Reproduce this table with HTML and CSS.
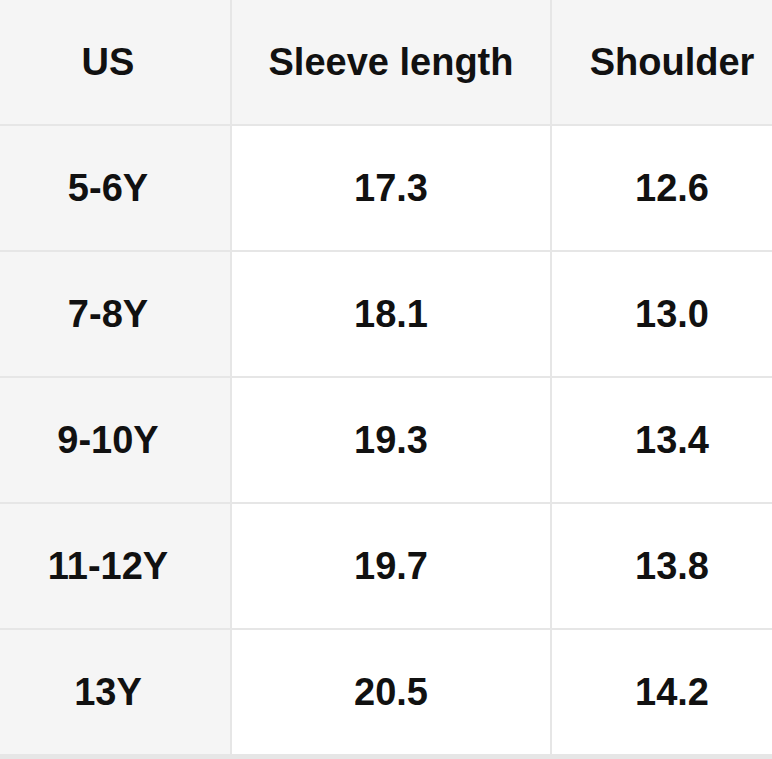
FILE: index.html
```html
<!DOCTYPE html>
<html>
<head>
<meta charset="utf-8">
<link rel="stylesheet" href="styles.css">
</head>
<body>
<div class="table">
  <div class="cell head c1">US</div>
  <div class="cell head c2">Sleeve length</div>
  <div class="cell head c3">Shoulder</div>

  <div class="cell side c1">5-6Y</div>
  <div class="cell c2">17.3</div>
  <div class="cell c3">12.6</div>

  <div class="cell side c1">7-8Y</div>
  <div class="cell c2">18.1</div>
  <div class="cell c3">13.0</div>

  <div class="cell side c1">9-10Y</div>
  <div class="cell c2">19.3</div>
  <div class="cell c3">13.4</div>

  <div class="cell side c1">11-12Y</div>
  <div class="cell c2">19.7</div>
  <div class="cell c3">13.8</div>

  <div class="cell side c1">13Y</div>
  <div class="cell c2">20.5</div>
  <div class="cell c3">14.2</div>
</div>
</body>
</html>
```
FILE: styles.css
```css
html, body {
  margin: 0;
  padding: 0;
  background: #ffffff;
  overflow: hidden;
}
.table {
  display: grid;
  grid-template-columns: 230px 318px 220px;
  grid-auto-rows: 124px;
  gap: 2px;
  background: #e6e6e6;
  width: 772px;
  height: 759px;
  align-content: start;
  font-family: "Liberation Sans", Arial, sans-serif;
  font-weight: bold;
  font-size: 38px;
  color: #111111;
}
.cell {
  background: #ffffff;
  display: flex;
  align-items: center;
  justify-content: center;
}
.head, .side {
  background: #f5f5f5;
}
.c1 {
  padding-right: 14px;
}
.c3 {
  padding-left: 20px;
}
```
